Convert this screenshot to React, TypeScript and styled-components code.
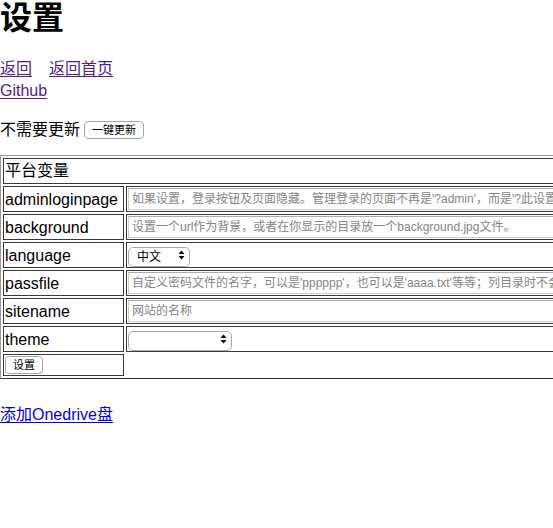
import React from "react";
import styled, { createGlobalStyle } from "styled-components";

const Global = createGlobalStyle`
  html, body { margin: 0; padding: 0; overflow: hidden; background: #fff; }
  body {
    font-family: "Liberation Sans", "Noto Sans CJK SC", sans-serif;
    font-size: 16px;
    line-height: 22px;
    color: #000;
  }
`;

const Page = styled.div`
  width: 553px;
  min-height: 528px;
`;

const Title = styled.h1`
  margin: 0;
  font-size: 32px;
  line-height: 36px;
  font-weight: bold;
`;

const Nav = styled.div`
  margin-top: 22px;
`;

const Line = styled.div<{ $gap?: number }>`
  display: flex;
  align-items: center;
  gap: ${(p) => p.$gap ?? 0}px;
  height: 22px;
  white-space: nowrap;
`;

const Link = styled.a<{ $visited?: boolean }>`
  color: ${(p) => (p.$visited ? "#551a8b" : "#0000ee")};
  text-decoration: underline;
  text-underline-offset: 2px;
  cursor: pointer;
`;

const UpdateRow = styled(Line)`
  margin-top: 17px;
`;

const SmallButton = styled.button`
  display: block;
  box-sizing: border-box;
  height: 18px;
  padding: 0 7px;
  border: 1px solid #a6a6a6;
  border-radius: 4px;
  background: #fff;
  font-family: "Liberation Sans", "Noto Sans CJK SC", sans-serif;
  font-size: 11px;
  line-height: 16px;
  color: #000;
  white-space: nowrap;
`;

const Table = styled.table`
  margin-top: 14px;
  border-collapse: separate;
  border-spacing: 2px;
  border-style: solid;
  border-width: 1px;
  border-color: #9a9a9a #333 #333 #9a9a9a;
`;

const Cell = styled.td<{ $short?: boolean }>`
  border: 1px solid #3a3a3a;
  padding: 1px;
  height: ${(p) => (p.$short ? 18 : 22)}px;
  line-height: ${(p) => (p.$short ? 18 : 22)}px;
  white-space: nowrap;
  vertical-align: middle;
`;

const LabelCell = styled.td`
  border: 1px solid #3a3a3a;
  padding: 3px 1px 0;
  width: 117px;
  min-width: 117px;
  height: 21px;
  line-height: 20px;
  white-space: nowrap;
  vertical-align: top;
`;

const EmptyCell = styled.td`
  padding: 1px;
  border: none;
`;

const TextInput = styled.input`
  display: block;
  box-sizing: border-box;
  width: 600px;
  height: 22px;
  margin: 0;
  padding: 0 3px;
  border: 1px solid #cdcdcd;
  border-top-color: #adadad;
  font-family: "Liberation Sans", "Noto Sans CJK SC", sans-serif;
  font-size: 12px;
  color: #000;
  &::placeholder { color: #858585; }
`;

const SelectWrap = styled.div<{ $w: number }>`
  position: relative;
  width: ${(p) => p.$w}px;
  height: 20px;
`;

const Select = styled.select`
  appearance: none;
  -webkit-appearance: none;
  box-sizing: border-box;
  width: 100%;
  height: 20px;
  margin: 0;
  padding: 0 20px 0 8px;
  border: 1px solid #a9a9a9;
  border-radius: 5px;
  background: #fff;
  font-family: "Liberation Sans", "Noto Sans CJK SC", sans-serif;
  font-size: 12px;
  color: #000;
`;

const Arrows = styled.svg`
  position: absolute;
  right: 5px;
  top: 5px;
  pointer-events: none;
`;

const BottomLink = styled.div`
  margin-top: 25px;
`;

function MacSelect({ width, value, options }: { width: number; value: string; options: string[] }) {
  return (
    <SelectWrap $w={width}>
      <Select defaultValue={value}>
        {options.map((o) => (
          <option key={o} value={o}>
            {o}
          </option>
        ))}
      </Select>
      <Arrows width="7" height="10" viewBox="0 0 7 10">
        <path d="M0.5 4 L3.5 0.5 L6.5 4 Z" fill="#000" />
        <path d="M0.5 6 L3.5 9.5 L6.5 6 Z" fill="#000" />
      </Arrows>
    </SelectWrap>
  );
}

const rows = [
  {
    key: "adminloginpage",
    ph: "如果设置，登录按钮及页面隐藏。管理登录的页面不再是'?admin'，而是'?此设置的值'。如果设置成'admin'，需要在网站后面加?admin来登录。",
  },
  { key: "background", ph: "设置一个url作为背景，或者在你显示的目录放一个background.jpg文件。" },
  { key: "language", select: { w: 62, value: "中文", options: ["中文", "English"] } },
  { key: "passfile", ph: "自定义密码文件的名字，可以是'pppppp'，也可以是'aaaa.txt'等等；列目录时不会显示，只有知道密码才能查看或下载此文件。" },
  { key: "sitename", ph: "网站的名称" },
  { key: "theme", select: { w: 104, value: "", options: [""] } },
];

export default function App() {
  return (
    <Page>
      <Global />
      <Title>设置</Title>
      <Nav>
        <Line $gap={17}>
          <Link $visited>返回</Link>
          <Link $visited>返回首页</Link>
        </Line>
        <Line>
          <Link $visited>Github</Link>
        </Line>
      </Nav>
      <UpdateRow $gap={4}>
        <span>不需要更新</span>
        <SmallButton>一键更新</SmallButton>
      </UpdateRow>
      <Table>
        <tbody>
          <tr>
            <Cell colSpan={2}>平台变量</Cell>
          </tr>
          {rows.map((r) => (
            <tr key={r.key}>
              <LabelCell>{r.key}</LabelCell>
              <Cell>
                {r.select ? (
                  <MacSelect width={r.select.w} value={r.select.value} options={r.select.options} />
                ) : (
                  <TextInput type="text" placeholder={r.ph} />
                )}
              </Cell>
            </tr>
          ))}
          <tr>
            <Cell $short>
              <SmallButton>设置</SmallButton>
            </Cell>
            <EmptyCell />
          </tr>
        </tbody>
      </Table>
      <BottomLink>
        <Link>添加Onedrive盘</Link>
      </BottomLink>
    </Page>
  );
}
